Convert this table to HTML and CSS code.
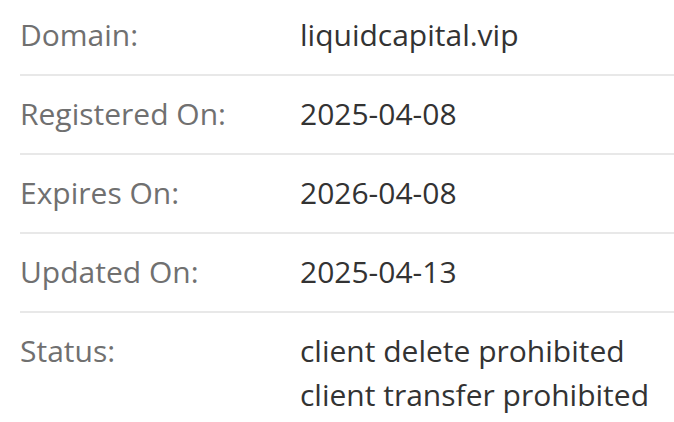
FILE: index.html
```html
<!DOCTYPE html>
<html lang="en">
<head>
<meta charset="utf-8">
<title>Domain info</title>
<link rel="stylesheet" href="styles.css">
</head>
<body>
<div class="info">
  <div class="row">
    <div class="label">Domain:</div>
    <div class="value">liquidcapital.vip</div>
  </div>
  <div class="row">
    <div class="label">Registered On:</div>
    <div class="value">2025-04-08</div>
  </div>
  <div class="row">
    <div class="label">Expires On:</div>
    <div class="value">2026-04-08</div>
  </div>
  <div class="row">
    <div class="label">Updated On:</div>
    <div class="value">2025-04-13</div>
  </div>
  <div class="row">
    <div class="label">Status:</div>
    <div class="value">client delete prohibited<br>client transfer prohibited</div>
  </div>
</div>
</body>
</html>
```

FILE: styles.css
```css
html, body {
  margin: 0;
  padding: 0;
  background: #ffffff;
}
body {
  font-family: "Open Sans", "Liberation Sans", sans-serif;
  font-size: 30px;
  line-height: 44px;
  overflow: hidden;
}
.info {
  margin-left: 20px;
  margin-top: -3px;
}
.row {
  display: grid;
  grid-template-columns: 280px 1fr;
  padding: 16px 0 17px 0;
  border-bottom: 2px solid #e8e8e8;
}
.label {
  color: #707070;
}
.value {
  color: #333333;
}
```
